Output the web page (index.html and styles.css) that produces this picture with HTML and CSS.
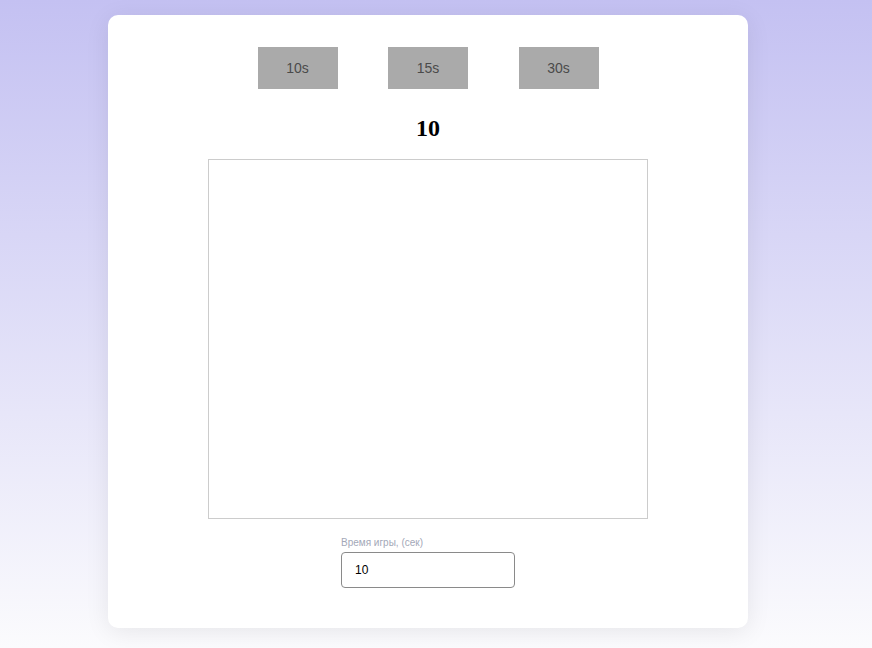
FILE: index.html
```html
<!DOCTYPE html>
<html lang="ru">
<head>
<meta charset="utf-8">
<link rel="stylesheet" href="styles.css">
</head>
<body>
<div class="page">
  <div class="card">
    <div class="modes">
      <button class="mode">10s</button>
      <button class="mode">15s</button>
      <button class="mode">30s</button>
    </div>
    <h2 class="timer">10</h2>
    <div class="board"></div>
    <div class="field">
      <label class="label">Время игры, (сек)</label>
      <input class="input" type="text" value="10">
    </div>
  </div>
</div>
</body>
</html>
```
FILE: styles.css
```css
html, body {
  margin: 0;
  height: 100%;
}
body {
  background: linear-gradient(to bottom, #c4c1f2 0%, #fbfbfd 100%);
  font-family: "Liberation Sans", Arial, sans-serif;
}
.page {
  width: 856px;
  padding-top: 15px;
  display: flex;
  justify-content: center;
}
.card {
  width: 640px;
  height: 613px;
  box-sizing: border-box;
  background: #fff;
  border-radius: 10px;
  box-shadow: 0 4px 24px rgba(0, 0, 0, 0.08);
  padding-top: 32px;
  display: flex;
  flex-direction: column;
  align-items: center;
}
.modes {
  display: flex;
  gap: 50.5px;
}
.mode {
  width: 80px;
  height: 42px;
  border: none;
  background: #aaaaaa;
  color: #4a4a4a;
  font-family: "Liberation Sans", Arial, sans-serif;
  font-size: 14px;
  padding: 0;
}
.timer {
  font-family: "Liberation Serif", "Times New Roman", serif;
  font-size: 24px;
  font-weight: bold;
  margin: 25px 0 17px;
  line-height: 28px;
  color: #000;
}
.board {
  width: 440px;
  height: 360px;
  box-sizing: border-box;
  border: 1px solid #cccccc;
}
.field {
  margin-top: 18px;
  width: 174px;
  display: flex;
  flex-direction: column;
}
.label {
  font-size: 10px;
  color: #a3a8b8;
  line-height: 12px;
  margin-bottom: 3px;
}
.input {
  width: 174px;
  height: 36px;
  box-sizing: border-box;
  border: 1px solid #8a8a8a;
  border-radius: 4px;
  padding: 0 13px;
  font-family: "Liberation Sans", Arial, sans-serif;
  font-size: 12px;
  color: #000;
  outline: none;
}
```
